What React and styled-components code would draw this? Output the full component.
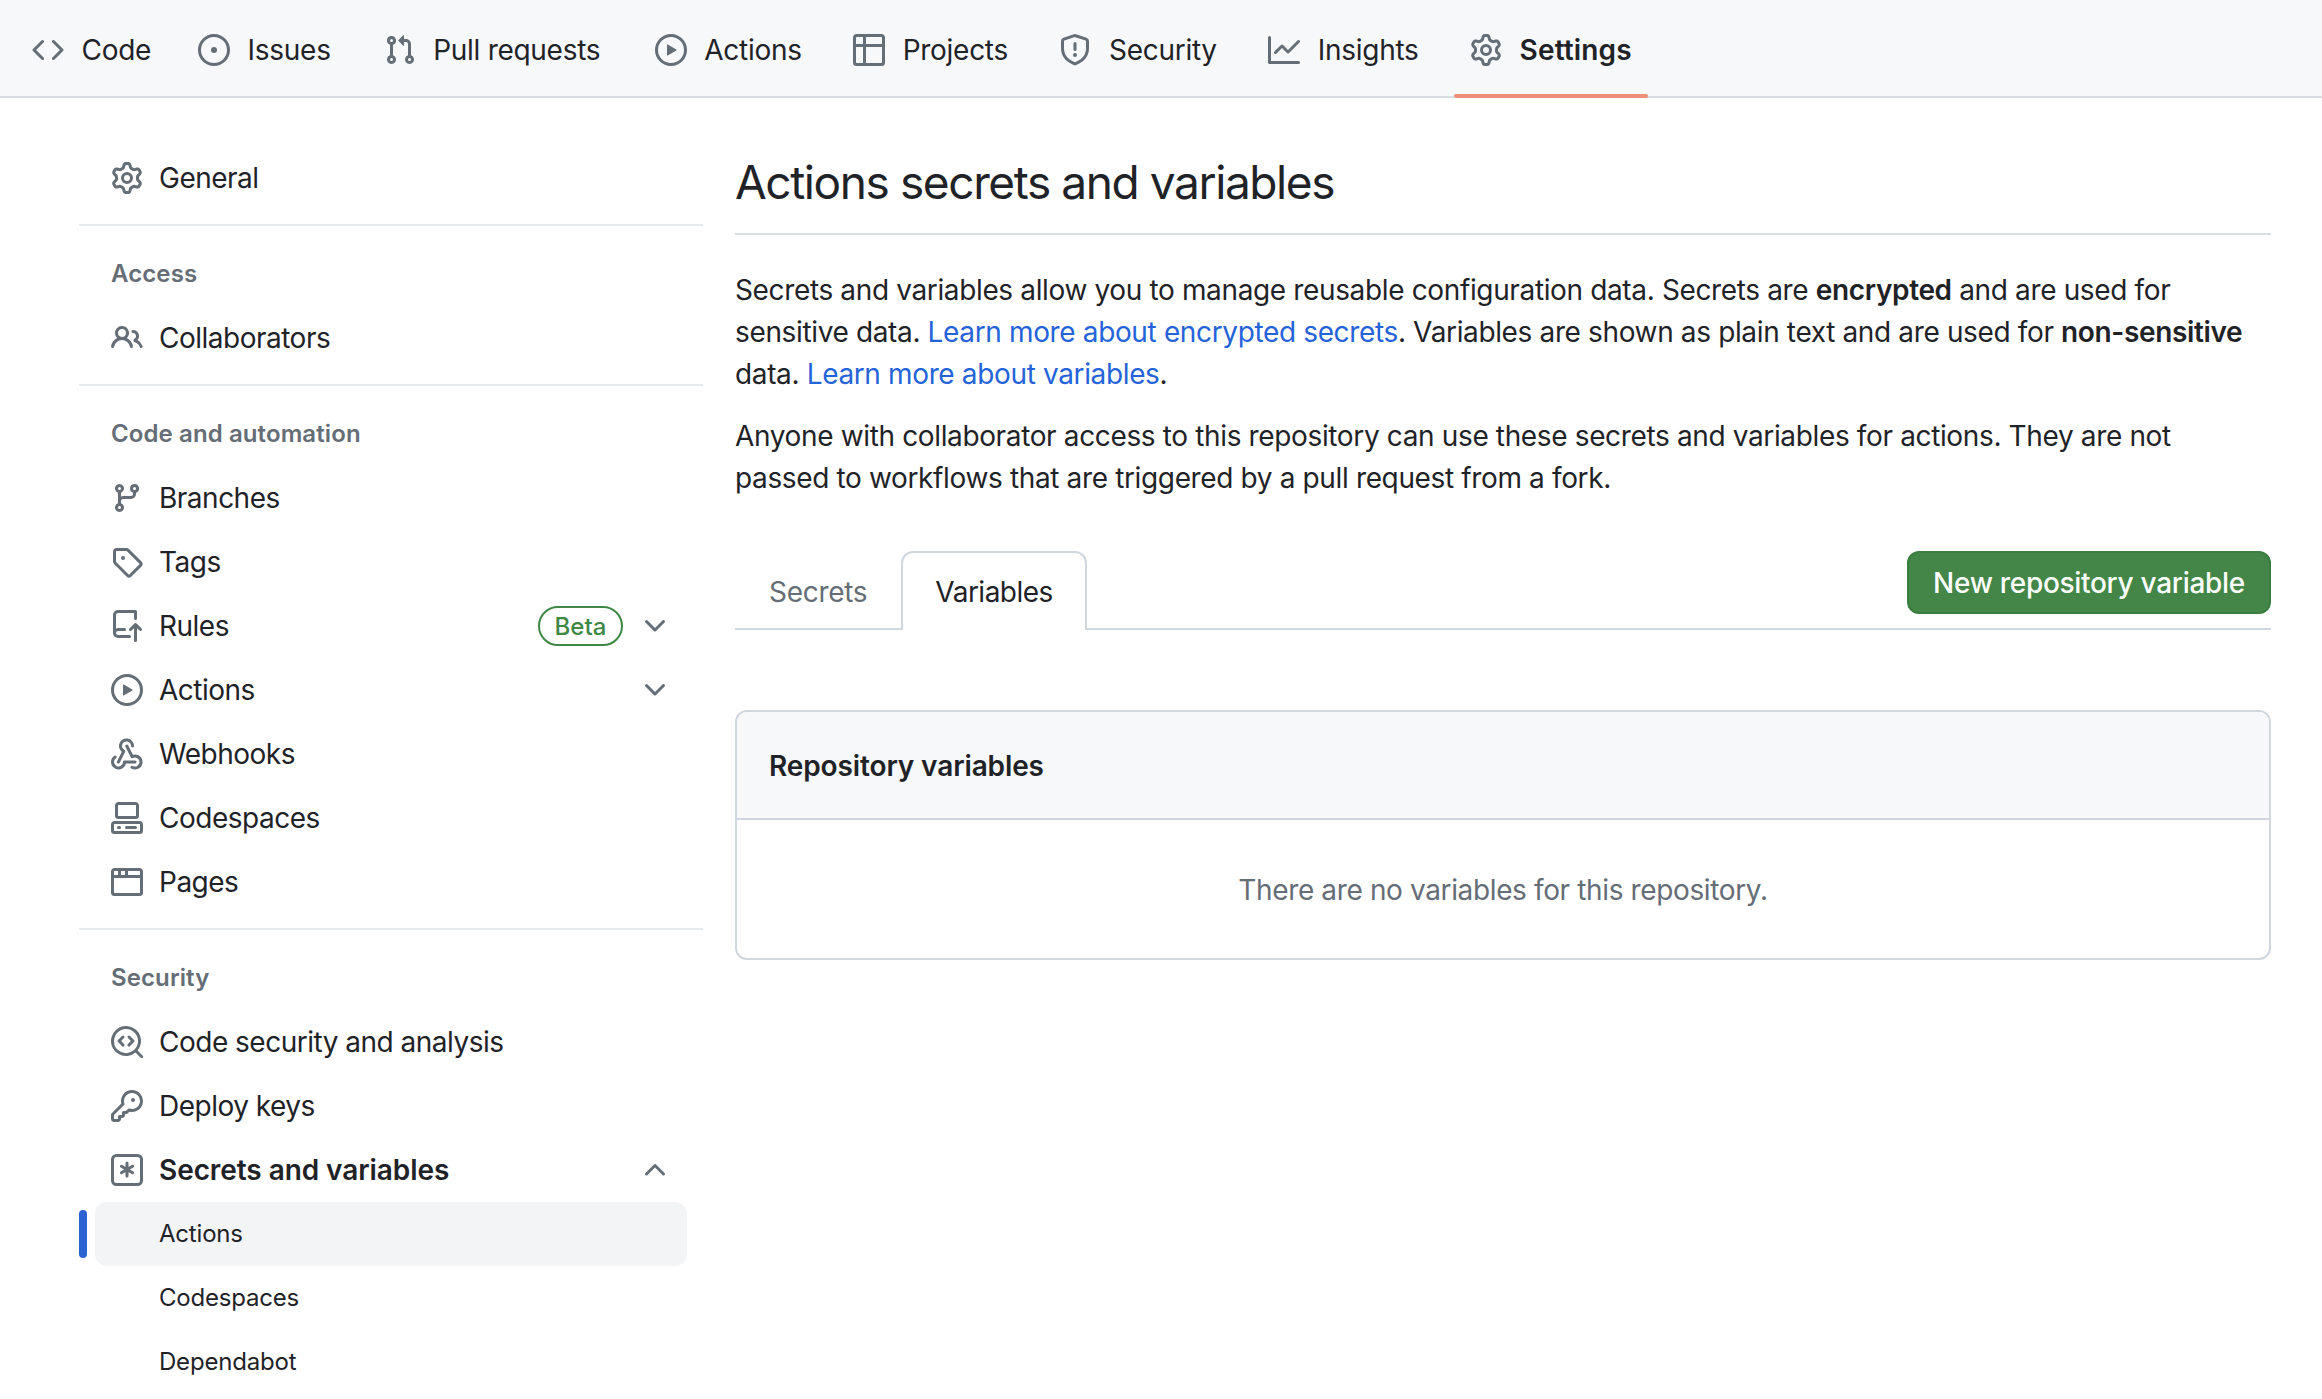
import React from "react";
import styled, { createGlobalStyle } from "styled-components";

const Global = createGlobalStyle`
  html, body { margin: 0; padding: 0; background: #fff; overflow: hidden; height: 100%; }
  * { box-sizing: border-box; }
  body { font-family: Inter, "Liberation Sans", sans-serif; color: #1f2328; }
`;

const Svg = styled.svg`
  width: 32px; height: 32px; flex: none; fill: #656d76;
`;
const StrokeSvg = styled(Svg)`
  fill: none; stroke: #656d76; stroke-width: 1.5; stroke-linecap: round; stroke-linejoin: round;
`;

const octicon = (...paths) => () => (
  <Svg viewBox="0 0 16 16" aria-hidden="true">
    {paths.map((d, i) => <path key={i} d={d} />)}
  </Svg>
);

const CodeIcon = octicon("m11.28 3.22 4.25 4.25a.75.75 0 0 1 0 1.06l-4.25 4.25a.749.749 0 0 1-1.275-.326.749.749 0 0 1 .215-.734L13.94 8l-3.72-3.72a.749.749 0 0 1 .326-1.275.749.749 0 0 1 .734.215Zm-6.56 0a.751.751 0 0 1 1.042.018.751.751 0 0 1 .018 1.042L2.06 8l3.72 3.72a.749.749 0 0 1-.326 1.275.749.749 0 0 1-.734-.215L.47 8.53a.75.75 0 0 1 0-1.06Z");
const IssueIcon = octicon("M8 9.5a1.5 1.5 0 1 0 0-3 1.5 1.5 0 0 0 0 3Z", "M8 0a8 8 0 1 1 0 16A8 8 0 0 1 8 0ZM1.5 8a6.5 6.5 0 1 0 13 0 6.5 6.5 0 0 0-13 0Z");
const PullIcon = octicon("M1.5 3.25a2.25 2.25 0 1 1 3 2.122v5.256a2.251 2.251 0 1 1-1.5 0V5.372A2.25 2.25 0 0 1 1.5 3.25Zm5.677-.177L9.573.677A.25.25 0 0 1 10 .854V2.5h1A2.5 2.5 0 0 1 13.5 5v5.628a2.251 2.251 0 1 1-1.5 0V5a1 1 0 0 0-1-1h-1v1.646a.25.25 0 0 1-.427.177L7.177 3.427a.25.25 0 0 1 0-.354ZM3.75 2.5a.75.75 0 1 0 0 1.5.75.75 0 0 0 0-1.5Zm0 9.5a.75.75 0 1 0 0 1.5.75.75 0 0 0 0-1.5Zm8.25.75a.75.75 0 1 0 1.5 0 .75.75 0 0 0-1.5 0Z");
const PlayIcon = octicon("M8 0a8 8 0 1 1 0 16A8 8 0 0 1 8 0ZM1.5 8a6.5 6.5 0 1 0 13 0 6.5 6.5 0 0 0-13 0Zm4.879-2.773 4.264 2.559a.25.25 0 0 1 0 .428l-4.264 2.559A.25.25 0 0 1 6 10.559V5.442a.25.25 0 0 1 .379-.215Z");
const TableIcon = octicon("M0 1.75C0 .784.784 0 1.75 0h12.5C15.216 0 16 .784 16 1.75v12.5A1.75 1.75 0 0 1 14.25 16H1.75A1.75 1.75 0 0 1 0 14.25ZM6.5 6.5v8h7.75a.25.25 0 0 0 .25-.25V6.5Zm8-1.5V1.75a.25.25 0 0 0-.25-.25H6.5V5Zm-13 1.5v7.75c0 .138.112.25.25.25H5v-8ZM5 5V1.5H1.75a.25.25 0 0 0-.25.25V5Z");
const ShieldIcon = octicon("M7.467.133a1.748 1.748 0 0 1 1.066 0l5.25 1.68A1.75 1.75 0 0 1 15 3.48V7c0 1.566-.32 3.182-1.303 4.682-.983 1.498-2.585 2.813-5.032 3.855a1.697 1.697 0 0 1-1.33 0c-2.447-1.042-4.049-2.357-5.032-3.855C1.32 10.182 1 8.566 1 7V3.48a1.75 1.75 0 0 1 1.217-1.667Zm.61 1.429a.25.25 0 0 0-.153 0l-5.25 1.68a.25.25 0 0 0-.174.238V7c0 1.358.275 2.666 1.057 3.86.784 1.194 2.121 2.34 4.366 3.297a.196.196 0 0 0 .154 0c2.245-.956 3.582-2.104 4.366-3.298C13.225 9.666 13.5 8.36 13.5 7V3.48a.251.251 0 0 0-.174-.237l-5.25-1.68ZM8.75 4.75v3a.75.75 0 0 1-1.5 0v-3a.75.75 0 0 1 1.5 0ZM9 10.5a1 1 0 1 1-2 0 1 1 0 0 1 2 0Z");
const GraphIcon = octicon("M1.5 1.75V13.5h13.75a.75.75 0 0 1 0 1.5H.75a.75.75 0 0 1-.75-.75V1.75a.75.75 0 0 1 1.5 0Zm14.28 2.53-5.25 5.25a.75.75 0 0 1-1.06 0L7 7.06 4.28 9.78a.751.751 0 0 1-1.042-.018.751.751 0 0 1-.018-1.042l3.25-3.25a.75.75 0 0 1 1.06 0L10 7.94l4.72-4.72a.751.751 0 0 1 1.042.018.751.751 0 0 1 .018 1.042Z");
const GearIcon = octicon("M8 0a8.2 8.2 0 0 1 .701.031C9.444.095 9.99.645 10.16 1.29l.288 1.107c.018.066.079.158.212.224.231.114.454.243.668.386.123.082.233.09.299.071l1.103-.303c.644-.176 1.392.021 1.82.63.27.385.506.792.704 1.218.315.675.111 1.422-.364 1.891l-.814.806c-.049.048-.098.147-.088.294.016.257.016.515 0 .772-.01.147.038.246.088.294l.814.806c.475.469.679 1.216.364 1.891a7.977 7.977 0 0 1-.704 1.217c-.428.61-1.176.807-1.82.63l-1.102-.302c-.067-.019-.177-.011-.3.071a5.909 5.909 0 0 1-.668.386c-.133.066-.194.158-.211.224l-.29 1.106c-.168.646-.715 1.196-1.458 1.26a8.006 8.006 0 0 1-1.402 0c-.743-.064-1.289-.614-1.458-1.26l-.289-1.106c-.018-.066-.079-.158-.212-.224a5.738 5.738 0 0 1-.668-.386c-.123-.082-.233-.09-.299-.071l-1.103.303c-.644.176-1.392-.021-1.82-.63a8.12 8.12 0 0 1-.704-1.218c-.315-.675-.111-1.422.363-1.891l.815-.806c.05-.048.098-.147.088-.294a6.214 6.214 0 0 1 0-.772c.01-.147-.038-.246-.088-.294l-.815-.806C.635 6.045.431 5.298.746 4.623a7.92 7.92 0 0 1 .704-1.217c.428-.61 1.176-.807 1.82-.63l1.102.302c.067.019.177.011.3-.071.214-.143.437-.272.668-.386.133-.066.194-.158.211-.224l.29-1.106C6.009.645 6.556.095 7.299.03 7.53.01 7.764 0 8 0Zm-.571 1.525c-.036.003-.108.036-.137.146l-.289 1.105c-.147.561-.549.967-.998 1.189-.173.086-.34.183-.5.29-.417.278-.97.423-1.529.27l-1.103-.303c-.109-.03-.175.016-.195.045-.22.312-.412.644-.573.99-.014.031-.021.11.059.19l.815.806c.411.406.562.957.53 1.456a4.709 4.709 0 0 0 0 .582c.032.499-.119 1.05-.53 1.456l-.815.806c-.081.08-.073.159-.059.19.162.346.353.677.573.989.02.03.085.076.195.046l1.102-.303c.56-.153 1.113-.008 1.53.27.161.107.328.204.501.29.447.222.85.629.997 1.189l.289 1.105c.029.109.101.143.137.146a6.6 6.6 0 0 0 1.142 0c.036-.003.108-.036.137-.146l.289-1.105c.147-.561.549-.967.998-1.189.173-.086.34-.183.5-.29.417-.278.97-.423 1.529-.27l1.103.303c.109.029.175-.016.195-.045.22-.313.411-.644.573-.99.014-.031.021-.11-.059-.19l-.815-.806c-.411-.406-.562-.957-.53-1.456a4.709 4.709 0 0 0 0-.582c-.032-.499.119-1.05.53-1.456l.815-.806c.081-.08.073-.159.059-.19a6.464 6.464 0 0 0-.573-.989c-.02-.03-.085-.076-.195-.046l-1.102.303c-.56.153-1.113.008-1.53-.27a4.44 4.44 0 0 0-.501-.29c-.447-.222-.85-.629-.997-1.189l-.289-1.105c-.029-.11-.101-.143-.137-.146a6.6 6.6 0 0 0-1.142 0ZM11 8a3 3 0 1 1-6 0 3 3 0 0 1 6 0ZM9.5 8a1.5 1.5 0 1 0-3.001.001A1.5 1.5 0 0 0 9.5 8Z");
const PeopleIcon = octicon("M2 5.5a3.5 3.5 0 1 1 5.898 2.549 5.508 5.508 0 0 1 3.034 4.084.75.75 0 1 1-1.482.235 4 4 0 0 0-7.9 0 .75.75 0 0 1-1.482-.236A5.507 5.507 0 0 1 3.102 8.05 3.493 3.493 0 0 1 2 5.5ZM11 4a3.001 3.001 0 0 1 2.22 5.018 5.01 5.01 0 0 1 2.56 3.012.749.749 0 0 1-.885.954.752.752 0 0 1-.549-.514 3.507 3.507 0 0 0-2.522-2.372.75.75 0 0 1-.574-.73v-.352a.75.75 0 0 1 .416-.672A1.5 1.5 0 0 0 11 5.5.75.75 0 0 1 11 4Zm-5.5-.5a2 2 0 1 0-.001 3.999A2 2 0 0 0 5.5 3.5Z");
const BranchIcon = octicon("M9.5 3.25a2.25 2.25 0 1 1 3 2.122V6A2.5 2.5 0 0 1 10 8.5H6a1 1 0 0 0-1 1v1.128a2.251 2.251 0 1 1-1.5 0V5.372a2.25 2.25 0 1 1 1.5 0v1.836A2.493 2.493 0 0 1 6 7h4a1 1 0 0 0 1-1v-.628A2.25 2.25 0 0 1 9.5 3.25Zm-6 0a.75.75 0 1 0 1.5 0 .75.75 0 0 0-1.5 0Zm8.25-.75a.75.75 0 1 0 0 1.5.75.75 0 0 0 0-1.5ZM4.25 12a.75.75 0 1 0 0 1.5.75.75 0 0 0 0-1.5Z");
const TagIcon = octicon("M1 7.775V2.75C1 1.784 1.784 1 2.75 1h5.025c.464 0 .91.184 1.238.513l6.25 6.25a1.75 1.75 0 0 1 0 2.474l-5.026 5.026a1.75 1.75 0 0 1-2.474 0l-6.25-6.25A1.752 1.752 0 0 1 1 7.775Zm1.5 0c0 .066.026.13.073.177l6.25 6.25a.25.25 0 0 0 .354 0l5.025-5.025a.25.25 0 0 0 0-.354l-6.25-6.25a.25.25 0 0 0-.177-.073H2.75a.25.25 0 0 0-.25.25ZM6 5a1 1 0 1 1 0 2 1 1 0 0 1 0-2Z");
const RepoPushIcon = octicon("M1 2.5A2.5 2.5 0 0 1 3.5 0h8.75a.75.75 0 0 1 .75.75v3.5a.75.75 0 0 1-1.5 0V1.5h-8a1 1 0 0 0-1 1v6.708A2.492 2.492 0 0 1 3.5 9h3.25a.75.75 0 0 1 0 1.5H3.5a1 1 0 0 0 0 2h5.75a.75.75 0 0 1 0 1.5H3.5A2.5 2.5 0 0 1 1 11.5Zm13.23 7.79h-.001l-1.224-1.224v6.184a.75.75 0 0 1-1.5 0V9.066L10.28 10.29a.75.75 0 0 1-1.06-1.061l2.505-2.504a.75.75 0 0 1 1.06 0L15.29 9.23a.751.751 0 0 1-.018 1.042.751.751 0 0 1-1.042.018Z");
const CodespacesIcon = octicon("M0 11.25c0-.966.784-1.75 1.75-1.75h12.5c.966 0 1.75.784 1.75 1.75v3A1.75 1.75 0 0 1 14.25 16H1.75A1.75 1.75 0 0 1 0 14.25Zm2-9.5C2 .784 2.784 0 3.75 0h8.5C13.216 0 14 .784 14 1.75v5a1.75 1.75 0 0 1-1.75 1.75h-8.5A1.75 1.75 0 0 1 2 6.75Zm1.75-.25a.25.25 0 0 0-.25.25v5c0 .138.112.25.25.25h8.5a.25.25 0 0 0 .25-.25v-5a.25.25 0 0 0-.25-.25Zm-2 9.5a.25.25 0 0 0-.25.25v3c0 .138.112.25.25.25h12.5a.25.25 0 0 0 .25-.25v-3a.25.25 0 0 0-.25-.25Z", "M7 12.75a.75.75 0 0 1 .75-.75h4.5a.75.75 0 0 1 0 1.5h-4.5a.75.75 0 0 1-.75-.75Zm-4 0a.75.75 0 0 1 .75-.75h.5a.75.75 0 0 1 0 1.5h-.5a.75.75 0 0 1-.75-.75Z");
const BrowserIcon = octicon("M0 2.75C0 1.784.784 1 1.75 1h12.5c.966 0 1.75.784 1.75 1.75v10.5A1.75 1.75 0 0 1 14.25 15H1.75A1.75 1.75 0 0 1 0 13.25ZM14.5 6h-13v7.25c0 .138.112.25.25.25h12.5a.25.25 0 0 0 .25-.25Zm-6-3.5v2h6V2.75a.25.25 0 0 0-.25-.25ZM5 2.5v2h2v-2Zm-3.25 0a.25.25 0 0 0-.25.25V4.5h2v-2Z");
const CodescanIcon = octicon("M8.47 4.97a.75.75 0 0 0 0 1.06L9.94 7.5 8.47 8.97a.75.75 0 1 0 1.06 1.06l2-2a.75.75 0 0 0 0-1.06l-2-2a.75.75 0 0 0-1.06 0ZM6.53 6.03a.75.75 0 0 0-1.06-1.06l-2 2a.75.75 0 0 0 0 1.06l2 2a.75.75 0 1 0 1.06-1.06L5.06 7.5l1.47-1.47Z", "M12.246 13.307a7.501 7.501 0 1 1 1.06-1.06l2.474 2.473a.749.749 0 0 1-.326 1.275.749.749 0 0 1-.734-.215ZM1.5 7.5a6.002 6.002 0 0 0 3.608 5.504 6.002 6.002 0 0 0 6.486-1.117.75.75 0 0 1 .292-.293A6 6 0 1 0 1.5 7.5Z");
const KeyIcon = octicon("M10.5 0a5.499 5.499 0 1 1-1.288 10.848l-.932.932a.749.749 0 0 1-.53.22H7v.75a.749.749 0 0 1-.22.53l-.5.5a.749.749 0 0 1-.53.22H5v.75a.749.749 0 0 1-.22.53l-.5.5a.749.749 0 0 1-.53.22h-2A1.75 1.75 0 0 1 0 14.25v-2c0-.199.079-.389.22-.53l4.932-4.932A5.5 5.5 0 0 1 10.5 0Zm-4 5.5c-.001.431.069.86.205 1.269a.75.75 0 0 1-.181.768L1.5 12.56v1.69c0 .138.112.25.25.25h1.69l.06-.06v-1.19a.75.75 0 0 1 .75-.75h1.19l.06-.06v-1.19a.75.75 0 0 1 .75-.75h1.19l1.023-1.025a.75.75 0 0 1 .768-.18A4 4 0 1 0 6.5 5.5ZM11 6a1 1 0 1 1 0-2 1 1 0 0 1 0 2Z");
const ChevronDownIcon = octicon("M12.78 5.22a.749.749 0 0 1 0 1.06l-4.25 4.25a.749.749 0 0 1-1.06 0L3.22 6.28a.749.749 0 1 1 1.06-1.06L8 8.939l3.72-3.719a.749.749 0 0 1 1.06 0Z");
const ChevronUpIcon = octicon("M3.22 10.53a.749.749 0 0 1 0-1.06l4.25-4.25a.749.749 0 0 1 1.06 0l4.25 4.25a.749.749 0 1 1-1.06 1.06L8 6.811 4.28 10.53a.749.749 0 0 1-1.06 0Z");

const WebhookIcon = () => (
  <StrokeSvg viewBox="0 0 16 16">
    <path d="M10.75 4a3 3 0 1 0-4.4 2.65L3.7 12" />
    <path d="M2.1 9.5a3 3 0 1 0 4.65 2.5H12" />
    <path d="M7.9 4l2.7 5.35a3 3 0 1 1-.1 5.25" />
  </StrokeSvg>
);
const KeyAsteriskIcon = () => (
  <StrokeSvg viewBox="0 0 16 16">
    <rect x="0.75" y="0.75" width="14.5" height="14.5" rx="2" />
    <path d="M8 4.5v6.5M5.2 6.1l5.6 3.3M10.8 6.1l-5.6 3.3" />
  </StrokeSvg>
);

const Page = styled.div`height: 1399px; overflow: hidden;`;

const TopNav = styled.nav`
  display: flex; gap: 19.5px; height: 98px; padding: 0 16px;
  background: #f6f8fa; border-bottom: 2px solid #d8dee4;
`;
const NavItem = styled.a`
  position: relative; display: flex; align-items: center; gap: 17.5px; padding: 3px 16px 0;
  margin-right: ${p => p.$nudge || 0}px;
  font-size: 28px; letter-spacing: ${p => (p.$active ? "0.15px" : "-0.28px")};
  font-weight: ${p => (p.$active ? 600 : 400)};
  color: #1f2328; white-space: nowrap;
  ${p => p.$active && `&::after {
    content: ""; position: absolute; left: 0; right: 0; bottom: -2px; height: 4px;
    background: #ee9077; border-radius: 2px;
  }`}
`;

const Layout = styled.div`
  display: grid; grid-template-columns: 624px 1fr; column-gap: 32px;
  padding: 48px 51px 0 79px;
`;
const Side = styled.aside`display: flex; flex-direction: column;`;
const Divider = styled.hr`margin: 14px 0; border: 0; height: 2px; background: #e6eaef;`;
const SideHeading = styled.h3`
  margin: 0; height: 66px; padding: 0 0 0 32px; display: flex; align-items: center;
  font-size: 24px; font-weight: 600; letter-spacing: 0.1px; color: #656d76;
`;
const Row = styled.a`
  display: flex; align-items: center; gap: 16px; height: 64px; padding: 0 32px;
  font-size: 28px; color: #1f2328; white-space: nowrap;
  letter-spacing: ${p => (p.$bold ? "-0.07px" : "-0.5px")};
  font-weight: ${p => (p.$bold ? 600 : 400)};
`;
const RowLabel = styled.span`flex: 1;`;
const Beta = styled.span`
  display: inline-flex; align-items: center; justify-content: center;
  height: 40px; width: 85px; border: 2px solid #3f8745; border-radius: 20px;
  font-size: 24px; font-weight: 500; letter-spacing: 0; color: #3f8745;
`;
const SubRow = styled.a`
  position: relative; display: flex; align-items: center; height: 64px;
  margin: 0 16px; padding: 0 0 2px 64px; border-radius: 12px;
  font-size: 24px; letter-spacing: -0.2px; color: #1f2328;
  background: ${p => (p.$active ? "#f3f4f6" : "transparent")};
  ${p => p.$active && `&::before {
    content: ""; position: absolute; left: -16px; top: 8px; width: 8px; height: 48px;
    border-radius: 4px; background: #2a62d2;
  }`}
`;

const Main = styled.main`display: flex; flex-direction: column;`;
const Title = styled.h1`
  margin: 0; height: 89px; padding-top: 4px; border-bottom: 2px solid #d8dee4;
  font-size: 46px; line-height: 64px; font-weight: 400; letter-spacing: -1.4px;
`;
const Para = styled.p`
  margin: 0 0 20px; font-size: 28px; line-height: 42px; letter-spacing: -0.36px;
  &:first-of-type { margin-top: 34px; }
`;
const Link = styled.a`color: #2563d8;`;
const Strong = styled.strong`font-weight: 600;`;
const TabBar = styled.div`
  display: flex; align-items: flex-start; justify-content: space-between;
  margin-top: 32px; height: 79px; border-bottom: 2px solid #d0d7de;
`;
const Tabs = styled.div`display: flex;`;
const Tab = styled.a`
  display: flex; align-items: center; height: 79px; padding: 0 32px;
  font-size: 28px; letter-spacing: ${p => (p.$active ? "-0.5px" : "-0.3px")};
  color: ${p => (p.$active ? "#1f2328" : "#656d76")};
  border: 2px solid ${p => (p.$active ? "#d0d7de" : "transparent")};
  border-bottom: 0; border-radius: 12px 12px 0 0;
  background: ${p => (p.$active ? "#fff" : "transparent")};
`;
const PrimaryButton = styled.button`
  height: 63px; width: 364px; padding: 0; border: 2px solid #3a7d40; border-radius: 12px;
  background: #438647; color: #fff; font: 500 28px Inter, sans-serif; letter-spacing: -0.3px;
`;
const Box = styled.section`
  margin-top: 80px; border: 2px solid #d0d7de; border-radius: 12px; overflow: hidden;
`;
const BoxHead = styled.header`
  display: flex; align-items: center; height: 108px; padding: 2px 0 0 32px;
  background: #f6f8fa; border-bottom: 2px solid #d0d7de;
  font-size: 28px; font-weight: 600; letter-spacing: -0.12px;
`;
const BoxBody = styled.div`
  display: flex; align-items: center; justify-content: center; height: 138px; padding-top: 2px;
  font-size: 28px; letter-spacing: -0.37px; color: #656d76;
`;

const nav = [
  { icon: CodeIcon, label: "Code", nudge: -4.5 },
  { icon: IssueIcon, label: "Issues", nudge: 1.5 },
  { icon: PullIcon, label: "Pull requests", nudge: 3 },
  { icon: PlayIcon, label: "Actions" },
  { icon: TableIcon, label: "Projects" },
  { icon: ShieldIcon, label: "Security" },
  { icon: GraphIcon, label: "Insights" },
  { icon: GearIcon, label: "Settings", active: true },
];

const Item = ({ icon: I, children, bold, right }) => (
  <Row $bold={bold}>
    <I />
    <RowLabel>{children}</RowLabel>
    {right}
  </Row>
);

export default function App() {
  return (
    <Page>
      <Global />
      <TopNav>
        {nav.map(({ icon: I, label, active, nudge }) => (
          <NavItem key={label} $active={active} $nudge={nudge}><I />{label}</NavItem>
        ))}
      </TopNav>
      <Layout>
        <Side>
          <Item icon={GearIcon}>General</Item>
          <Divider />
          <SideHeading>Access</SideHeading>
          <Item icon={PeopleIcon}>Collaborators</Item>
          <Divider />
          <SideHeading>Code and automation</SideHeading>
          <Item icon={BranchIcon}>Branches</Item>
          <Item icon={TagIcon}>Tags</Item>
          <Item icon={RepoPushIcon} right={<><Beta>Beta</Beta><ChevronDownIcon /></>}>Rules</Item>
          <Item icon={PlayIcon} right={<ChevronDownIcon />}>Actions</Item>
          <Item icon={WebhookIcon}>Webhooks</Item>
          <Item icon={CodespacesIcon}>Codespaces</Item>
          <Item icon={BrowserIcon}>Pages</Item>
          <Divider />
          <SideHeading>Security</SideHeading>
          <Item icon={CodescanIcon}>Code security and analysis</Item>
          <Item icon={KeyIcon}>Deploy keys</Item>
          <Item icon={KeyAsteriskIcon} bold right={<ChevronUpIcon />}>Secrets and variables</Item>
          <SubRow $active>Actions</SubRow>
          <SubRow>Codespaces</SubRow>
          <SubRow>Dependabot</SubRow>
        </Side>
        <Main>
          <Title>Actions secrets and variables</Title>
          <Para>
            Secrets and variables allow you to manage reusable configuration data. Secrets are <Strong>encrypted</Strong> and are used for sensitive data. <Link>Learn more about encrypted secrets</Link>. Variables are shown as plain text and are used for <Strong>non-sensitive</Strong> data. <Link>Learn more about variables</Link>.
          </Para>
          <Para>
            Anyone with collaborator access to this repository can use these secrets and variables for actions. They are not passed to workflows that are triggered by a pull request from a fork.
          </Para>
          <TabBar>
            <Tabs>
              <Tab>Secrets</Tab>
              <Tab $active>Variables</Tab>
            </Tabs>
            <PrimaryButton>New repository variable</PrimaryButton>
          </TabBar>
          <Box>
            <BoxHead>Repository variables</BoxHead>
            <BoxBody>There are no variables for this repository.</BoxBody>
          </Box>
        </Main>
      </Layout>
    </Page>
  );
}
